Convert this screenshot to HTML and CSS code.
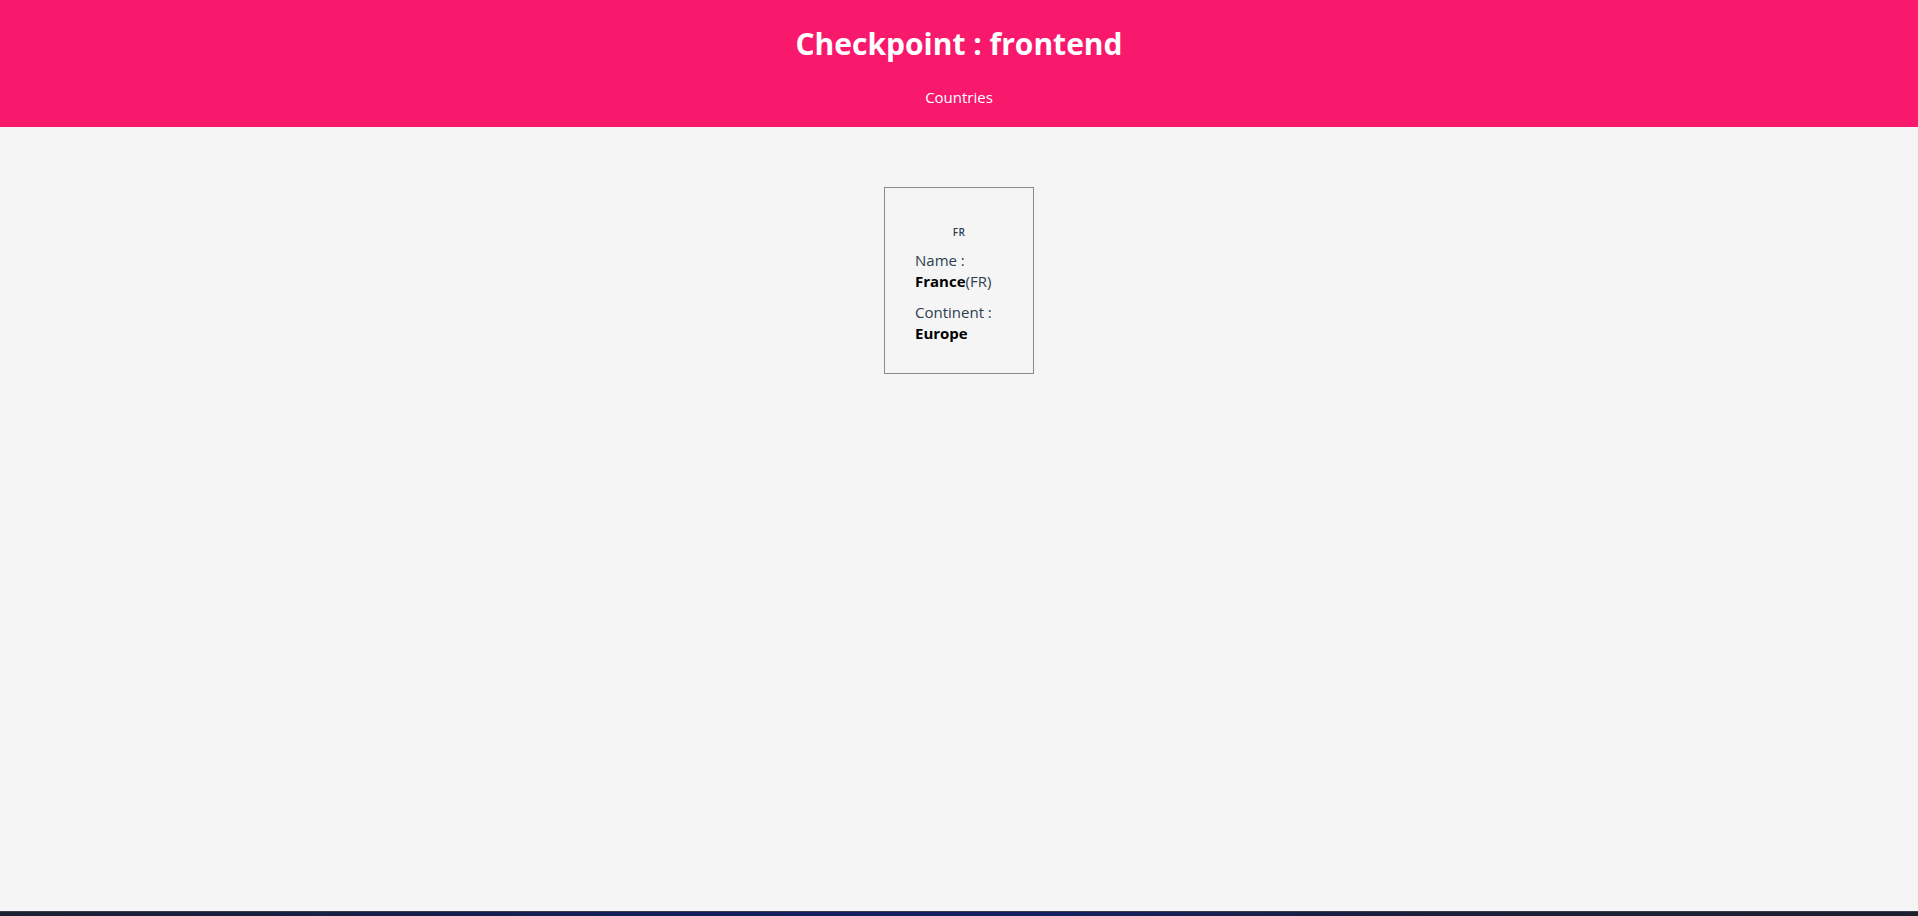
FILE: index.html
```html
<!DOCTYPE html>
<html lang="en">
<head>
<meta charset="utf-8">
<title>Checkpoint : frontend</title>
<link rel="stylesheet" href="styles.css">
</head>
<body>
<div class="app">
  <header class="header">
    <h1 class="title">Checkpoint : frontend</h1>
    <nav class="nav"><a class="nav-link" href="#">Countries</a></nav>
  </header>
  <main class="main">
    <div class="card">
      <div class="flag">FR</div>
      <p class="field">Name :<br><b class="strong">France</b>(FR)</p>
      <p class="field">Continent :<br><b class="strong">Europe</b></p>
    </div>
  </main>
  <div class="taskbar"></div>
</div>
</body>
</html>
```
FILE: styles.css
```css
html, body {
  margin: 0;
  padding: 0;
  height: 100%;
}
body {
  background: #f5f5f5;
  font-family: "Open Sans", "Noto Sans", sans-serif;
  color: #2c3e50;
}
.app {
  display: flex;
  flex-direction: column;
  min-height: 100vh;
}
.header {
  background: #f8186c;
  color: #fff;
  text-align: center;
  padding: 24px 0 20px;
  display: flex;
  flex-direction: column;
  align-items: center;
  gap: 23px;
}
.title {
  margin: 0;
  font-size: 30px;
  line-height: 40px;
  font-weight: 700;
}
.nav {
  line-height: 20px;
}
.nav-link {
  color: #fff;
  text-decoration: none;
  font-size: 15px;
}
.main {
  flex: 1;
  display: flex;
  justify-content: center;
  align-items: flex-start;
  padding-top: 60px;
}
.card {
  width: 150px;
  box-sizing: border-box;
  border: 1px solid #8a8a8a;
  padding: 37px 28px 29px 30px;
}
.flag {
  text-align: center;
  font-size: 10px;
  font-weight: 600;
  line-height: 14px;
  letter-spacing: 0.5px;
  margin-bottom: 11px;
  margin-right: 2px;
}
.field {
  margin: 0 0 10px;
  font-size: 15px;
  line-height: 21px;
}
.field:last-child {
  margin-bottom: 0;
}
.strong {
  color: #000;
  font-weight: 700;
}
.taskbar {
  height: 5px;
  border-top: 1px solid #3a3d48;
  box-sizing: border-box;
  background: linear-gradient(90deg, #1b2030 0%, #121f5c 35%, #152062 55%, #1a1f38 75%, #1c1f2c 100%);
}
```
